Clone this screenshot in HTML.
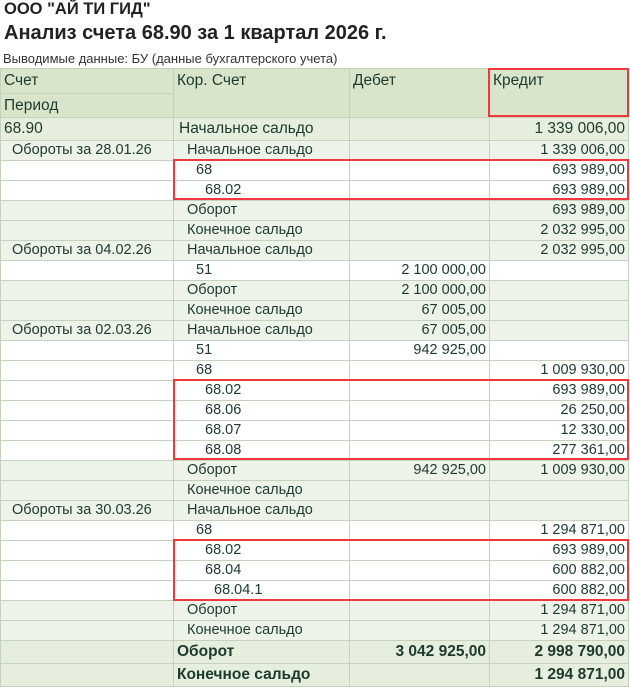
<!DOCTYPE html>
<html><head><meta charset="utf-8"><style>
body{margin:0;background:#fff;font-family:"Liberation Sans",sans-serif;color:#1c3a2e;width:630px;height:686px;overflow:hidden;position:relative}
.t1{position:absolute;left:4px;top:0px;font-size:16.5px;font-weight:bold;color:#222}
.t2{position:absolute;left:4px;top:22px;font-size:20px;font-weight:bold;color:#222}
.t3{position:absolute;left:3px;top:51px;font-size:13px;color:#333}
table{position:absolute;left:0;top:68px;border-collapse:collapse;table-layout:fixed;font-size:14.5px}
td{border:1px solid #c5d2bd;height:19px;padding:0 3px;white-space:nowrap;overflow:hidden;line-height:19px}
tr.h td{background:#d9e5cb;vertical-align:top;height:23px;line-height:24px;font-size:15.5px}
tr.h2 td{background:#d9e5cb;vertical-align:top;height:23px;line-height:23px;font-size:15.5px}
tr.g td{background:#eef3e9}
tr.w td{background:#fff}
tr.a td{background:#e6eedd;height:22px;line-height:22px;font-size:15.5px}
tr.tt td{background:#e6eedd;height:22px;line-height:22px;font-size:15.5px;font-weight:bold}
.r{text-align:right}
.box{position:absolute;border:2px solid #f0393f;box-sizing:border-box}
</style></head><body>
<div class="t1">ООО "АЙ ТИ ГИД"</div>
<div class="t2">Анализ счета 68.90 за 1 квартал 2026 г.</div>
<div class="t3">Выводимые данные: БУ (данные бухгалтерского учета)</div>
<table>
<colgroup><col style="width:173px"><col style="width:176px"><col style="width:140px"><col style="width:139px"></colgroup>
<tr class="h"><td>Счет</td><td rowspan="2">Кор. Счет</td><td rowspan="2">Дебет</td><td rowspan="2">Кредит</td></tr>
<tr class="h2"><td>Период</td></tr>
<tr class="a"><td>68.90</td><td style="padding-left:5px">Начальное сальдо</td><td></td><td class="r">1 339 006,00</td></tr>
<tr class="g"><td style="padding-left:11px">Обороты за 28.01.26</td><td style="padding-left:13px">Начальное сальдо</td><td></td><td class="r">1 339 006,00</td></tr>
<tr class="w"><td></td><td style="padding-left:22px">68</td><td></td><td class="r">693 989,00</td></tr>
<tr class="w"><td></td><td style="padding-left:31px">68.02</td><td></td><td class="r">693 989,00</td></tr>
<tr class="g"><td></td><td style="padding-left:13px">Оборот</td><td></td><td class="r">693 989,00</td></tr>
<tr class="g"><td></td><td style="padding-left:13px">Конечное сальдо</td><td></td><td class="r">2 032 995,00</td></tr>
<tr class="g"><td style="padding-left:11px">Обороты за 04.02.26</td><td style="padding-left:13px">Начальное сальдо</td><td></td><td class="r">2 032 995,00</td></tr>
<tr class="w"><td></td><td style="padding-left:22px">51</td><td class="r">2 100 000,00</td><td></td></tr>
<tr class="g"><td></td><td style="padding-left:13px">Оборот</td><td class="r">2 100 000,00</td><td></td></tr>
<tr class="g"><td></td><td style="padding-left:13px">Конечное сальдо</td><td class="r">67 005,00</td><td></td></tr>
<tr class="g"><td style="padding-left:11px">Обороты за 02.03.26</td><td style="padding-left:13px">Начальное сальдо</td><td class="r">67 005,00</td><td></td></tr>
<tr class="w"><td></td><td style="padding-left:22px">51</td><td class="r">942 925,00</td><td></td></tr>
<tr class="w"><td></td><td style="padding-left:22px">68</td><td></td><td class="r">1 009 930,00</td></tr>
<tr class="w"><td></td><td style="padding-left:31px">68.02</td><td></td><td class="r">693 989,00</td></tr>
<tr class="w"><td></td><td style="padding-left:31px">68.06</td><td></td><td class="r">26 250,00</td></tr>
<tr class="w"><td></td><td style="padding-left:31px">68.07</td><td></td><td class="r">12 330,00</td></tr>
<tr class="w"><td></td><td style="padding-left:31px">68.08</td><td></td><td class="r">277 361,00</td></tr>
<tr class="g"><td></td><td style="padding-left:13px">Оборот</td><td class="r">942 925,00</td><td class="r">1 009 930,00</td></tr>
<tr class="g"><td></td><td style="padding-left:13px">Конечное сальдо</td><td></td><td></td></tr>
<tr class="g"><td style="padding-left:11px">Обороты за 30.03.26</td><td style="padding-left:13px">Начальное сальдо</td><td></td><td></td></tr>
<tr class="w"><td></td><td style="padding-left:22px">68</td><td></td><td class="r">1 294 871,00</td></tr>
<tr class="w"><td></td><td style="padding-left:31px">68.02</td><td></td><td class="r">693 989,00</td></tr>
<tr class="w"><td></td><td style="padding-left:31px">68.04</td><td></td><td class="r">600 882,00</td></tr>
<tr class="w"><td></td><td style="padding-left:40px">68.04.1</td><td></td><td class="r">600 882,00</td></tr>
<tr class="g"><td></td><td style="padding-left:13px">Оборот</td><td></td><td class="r">1 294 871,00</td></tr>
<tr class="g"><td></td><td style="padding-left:13px">Конечное сальдо</td><td></td><td class="r">1 294 871,00</td></tr>
<tr class="tt"><td></td><td>Оборот</td><td class="r">3 042 925,00</td><td class="r">2 998 790,00</td></tr>
<tr class="tt"><td></td><td>Конечное сальдо</td><td></td><td class="r">1 294 871,00</td></tr>
</table>
<div class="box" style="left:488px;top:68px;width:141px;height:49px"></div>
<div class="box" style="left:173px;top:159px;width:456px;height:41px"></div>
<div class="box" style="left:173px;top:379px;width:456px;height:81px"></div>
<div class="box" style="left:173px;top:539px;width:456px;height:62px"></div>
</body></html>
